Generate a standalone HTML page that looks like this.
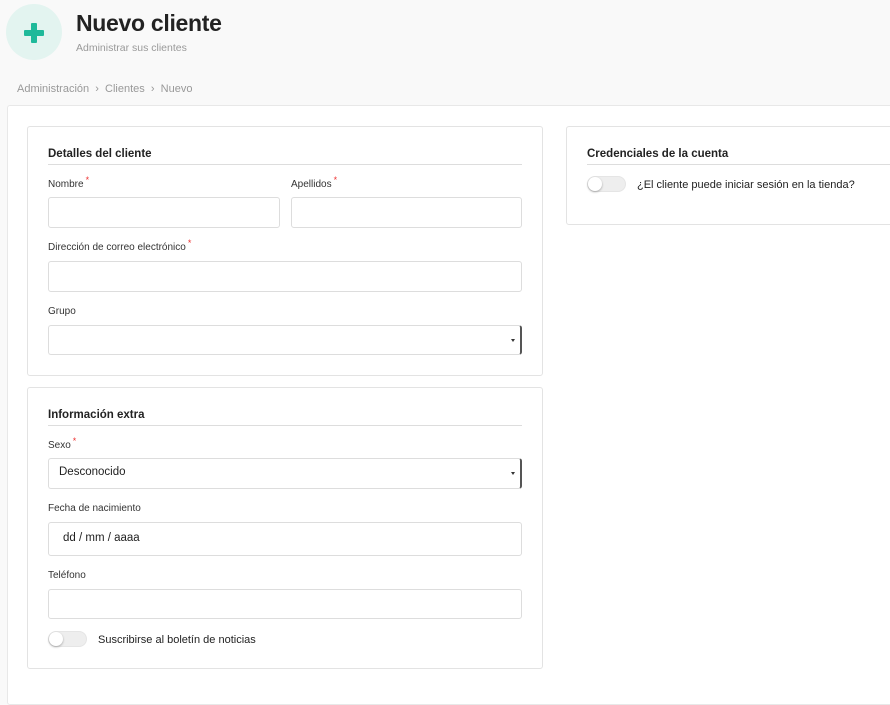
<!DOCTYPE html>
<html><head><meta charset="utf-8"><style>
*{box-sizing:border-box;margin:0;padding:0}
body{width:890px;height:679px;background:#f9f9f9;font-family:"Liberation Sans",sans-serif;position:relative;overflow:hidden;color:#222}
.a{position:absolute}
.main{left:7px;top:105px;width:890px;height:600px;background:#fff;border:1px solid #e8e8e8;border-radius:3px}
.panel{background:#fff;border:1px solid #e3e3e3;border-radius:3px}
.h{font-size:11.5px;font-weight:bold;color:#222}
.line{height:1px;background:#ddd}
.lbl{font-size:10px;color:#333}
.lbl i{color:#e33;font-style:normal;font-size:9px;position:relative;top:-4px;margin-left:2px}
.in{border:1px solid #ddd;border-radius:3px;background:#fff}
.sel{border-right:2px solid #555}
.sel:after{content:"";position:absolute;right:5px;top:13px;border:2px solid transparent;border-top:3px solid #333}
.tg{width:39px;height:16px;border-radius:8px;background:#eee;border:1px solid #e5e5e5}
.tg:before{content:"";position:absolute;left:0;top:0;width:14px;height:14px;border-radius:50%;background:#fff;box-shadow:0 1px 2px rgba(0,0,0,.3)}
</style></head><body>
<div class="a" style="left:6px;top:4px;width:56px;height:56px;border-radius:50%;background:#e3f4f0"></div>
<div class="a" style="left:24px;top:30px;width:20px;height:6px;background:#1fb99a;border-radius:1px"></div>
<div class="a" style="left:31px;top:23px;width:6px;height:20px;background:#1fb99a;border-radius:1px"></div>
<div class="a" style="left:76px;top:10px;font-size:23px;font-weight:bold;color:#222;letter-spacing:-0.3px">Nuevo cliente</div>
<div class="a" style="left:76px;top:42px;font-size:10.5px;color:#999">Administrar sus clientes</div>
<div class="a" style="left:17px;top:83px;font-size:11px;color:#999">Administración &nbsp;›&nbsp; Clientes &nbsp;›&nbsp; Nuevo</div>
<div class="a main"></div>

<div class="a panel" style="left:27px;top:126px;width:516px;height:250px"></div>
<div class="a h" style="left:48px;top:148px">Detalles del cliente</div>
<div class="a line" style="left:48px;top:164px;width:474px"></div>
<div class="a lbl" style="left:48px;top:179px">Nombre<i>*</i></div>
<div class="a lbl" style="left:291px;top:179px">Apellidos<i>*</i></div>
<div class="a in" style="left:48px;top:197px;width:232px;height:31px"></div>
<div class="a in" style="left:291px;top:197px;width:231px;height:31px"></div>
<div class="a lbl" style="left:48px;top:242px">Dirección de correo electrónico<i>*</i></div>
<div class="a in" style="left:48px;top:261px;width:474px;height:31px"></div>
<div class="a lbl" style="left:48px;top:306px">Grupo</div>
<div class="a in sel" style="left:48px;top:325px;width:474px;height:30px"></div>

<div class="a panel" style="left:27px;top:387px;width:516px;height:282px"></div>
<div class="a h" style="left:48px;top:409px">Información extra</div>
<div class="a line" style="left:48px;top:425px;width:474px"></div>
<div class="a lbl" style="left:48px;top:440px">Sexo<i>*</i></div>
<div class="a in sel" style="left:48px;top:458px;width:474px;height:31px"><span class="a" style="left:10px;top:7px;font-size:11.5px;color:#222">Desconocido</span></div>
<div class="a lbl" style="left:48px;top:503px">Fecha de nacimiento</div>
<div class="a in" style="left:48px;top:522px;width:474px;height:34px"><span class="a" style="left:14px;top:9px;font-size:11.5px;color:#222">dd / mm / aaaa</span></div>
<div class="a lbl" style="left:48px;top:570px">Teléfono</div>
<div class="a in" style="left:48px;top:589px;width:474px;height:30px"></div>
<div class="a tg" style="left:48px;top:631px"></div>
<div class="a" style="left:98px;top:634px;font-size:11px;color:#222">Suscribirse al boletín de noticias</div>

<div class="a panel" style="left:566px;top:126px;width:340px;height:99px"></div>
<div class="a h" style="left:587px;top:148px">Credenciales de la cuenta</div>
<div class="a line" style="left:587px;top:164px;width:310px"></div>
<div class="a tg" style="left:587px;top:176px"></div>
<div class="a" style="left:637px;top:179px;font-size:11px;color:#222">¿El cliente puede iniciar sesión en la tienda?</div>
</body></html>
